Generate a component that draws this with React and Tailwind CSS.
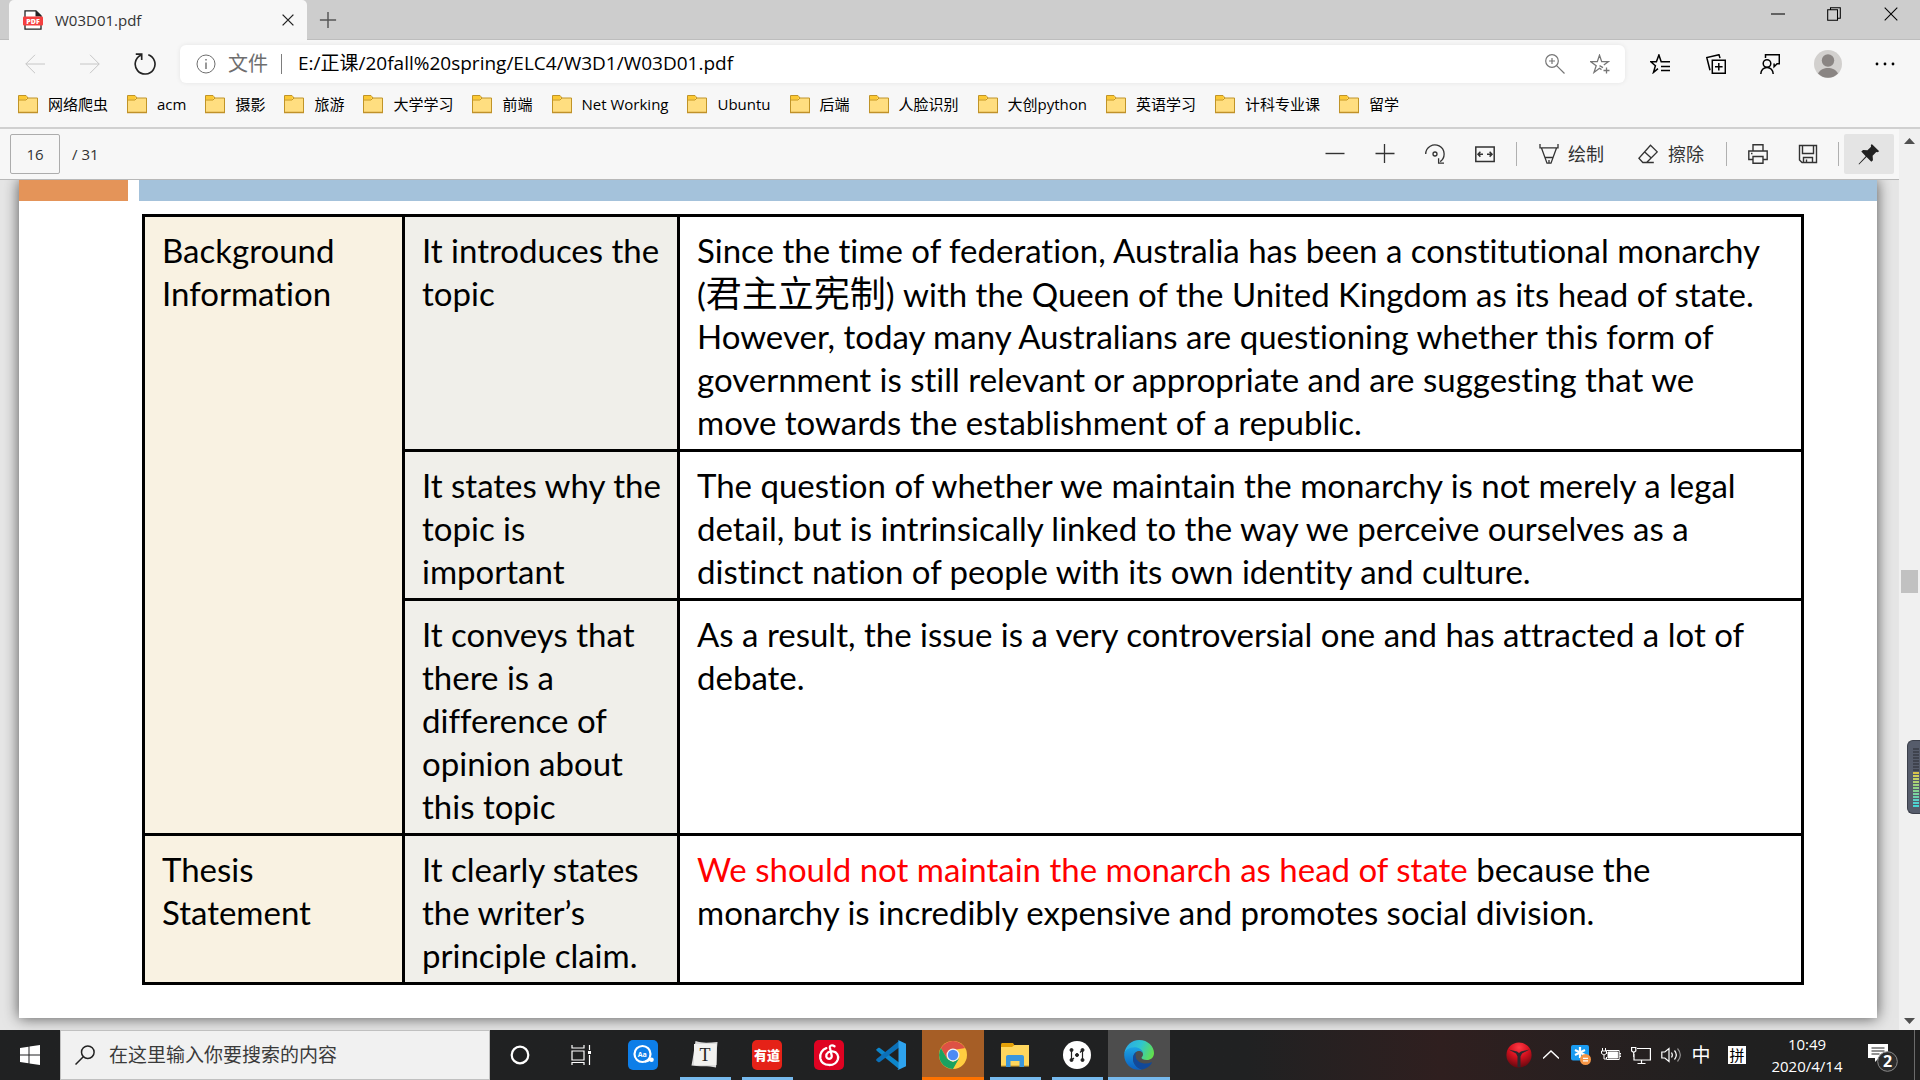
import React, { useState } from 'react';

const pastas = [
  '网络爬虫', 'acm', '摄影', '旅游', '大学学习', '前端', 'Net Working',
  'Ubuntu', '后端', '人脸识别', '大创python', '英语学习', '计科专业课', '留学',
];

const Icon = ({ size = 20, sw = 1, className = '', children }) => (
  <svg width={size} height={size} viewBox="0 0 20 20" fill="none" stroke="currentColor" strokeWidth={sw} className={`shrink-0 ${className}`} aria-hidden="true">
    {children}
  </svg>
);

const Folder = () => (
  <svg width="20" height="20" viewBox="0 0 20 20" className="shrink-0" aria-hidden="true">
    <path d="M.5 18.5v-17h7.5l2 2.5h9.5v14.5z" fill="#ffde80" stroke="#c09428" />
    <path d="M1 2h7l1 1.5-1.5 2H1z" fill="#fcc934" />
    <path d="M.5 6h7.5l2-2" fill="none" stroke="#c8961a" />
    <path d="M0 18.5h20" stroke="#c0912a" strokeWidth="1.5" />
  </svg>
);

const PdfIcon = () => (
  <svg width="20" height="20" viewBox="0 0 20 20" className="shrink-0" aria-hidden="true">
    <path d="M2 19.2V.8h11l5 5v13.4z" fill="#fff" stroke="#222" strokeWidth="1.3" />
    <path d="M12.5.5v6H18.5z" fill="#222" />
    <rect x="0" y="6.5" width="20" height="9" rx="1" fill="#f43f3f" />
    <text x="10" y="13.6" textAnchor="middle" fontSize="7" fontWeight="800" fill="#fff" fontFamily="Open Sans, sans-serif">PDF</text>
  </svg>
);

const TabStrip = () => (
  <header className="relative flex h-10 shrink-0 items-center border-b border-[#bdbdbd] bg-[#cdcdcd]">
    <div className="relative -mb-px ml-[9px] flex h-10 w-[298px] items-center rounded-t-[5px] bg-[#f7f7f7] pl-[14px] pr-[7px]">
      <PdfIcon />
      <span className="ml-3 flex-1 text-[15px] text-[#333]">W03D01.pdf</span>
      <button aria-label="关闭标签页" className="flex h-6 w-6 items-center justify-center text-[#222]">
        <Icon size={12} sw={2.2}><path d="M1 1l18 18M19 1L1 19" /></Icon>
      </button>
    </div>
    <button aria-label="新建标签页" className="flex h-8 w-[42px] items-center justify-center text-[#555]">
      <Icon size={18} sw={1.6}><path d="M10 1v18M1 10h18" /></Icon>
    </button>
    <div className="ml-auto flex h-7 self-start text-black">
      <button aria-label="最小化" className="flex w-14 items-center justify-center"><Icon size={14} sw={1.5}><path d="M0 10h20" /></Icon></button>
      <button aria-label="还原" className="flex w-14 items-center justify-center">
        <Icon size={14} sw={1.5}><path d="M1 4h14v15H1zM5 4V1h14v15h-4" /></Icon>
      </button>
      <button aria-label="关闭" className="flex w-[58px] items-center justify-center"><Icon size={14} sw={1.5}><path d="M1 1l18 18M19 1L1 19" /></Icon></button>
    </div>
  </header>
);

const AddressRow = () => {
  const [url, setUrl] = useState('E:/正课/20fall%20spring/ELC4/W3D1/W03D01.pdf');
  return (
    <div className="flex h-[47px] shrink-0 items-center pl-[7px] pr-[9px]">
      <button aria-label="后退" className="flex w-14 justify-center text-[#c6c6c6]"><Icon><path d="M20 10H.8M10 .8L.8 10l9.2 9.2" /></Icon></button>
      <button aria-label="前进" className="flex w-[54px] justify-center text-[#c6c6c6]"><Icon><path d="M0 10h19.2M10 .8l9.2 9.2-9.2 9.2" /></Icon></button>
      <button aria-label="刷新" className="flex w-14 justify-center text-[#222]">
        <Icon size={22} sw={1.5}><path d="M13 1.6A9 9 0 1 1 6.2 2M1.6 1H7v5.4" /></Icon>
      </button>
      <div className="ml-[7px] flex h-[38px] flex-1 items-center rounded-md bg-white pl-4 pr-[6px] shadow-[0_0_5px_rgba(0,0,0,0.08)]">
        <Icon className="text-[#6e6e6e]"><circle cx="10" cy="10" r="9" /><path d="M10 8.5V15M10 5v1.6" strokeWidth="1.4" /></Icon>
        <label htmlFor="url" className="ml-3 border-r border-[#7d7d7d] pr-[13px] text-[20px] leading-5 text-[#6e6e6e]">文件</label>
        <input id="url" value={url} onChange={e => setUrl(e.target.value)} className="ml-4 min-w-0 flex-1 bg-transparent text-[19px] text-black outline-none" />
        <button aria-label="缩放" className="flex w-[52px] justify-center text-[#767676]">
          <Icon sw={1.2}><circle cx="7" cy="7" r="6.3" /><path d="M11.6 11.6L19.5 19.5M7 4v6M4 7h6" /></Icon>
        </button>
        <button aria-label="添加到收藏夹" className="flex w-[38px] justify-center text-[#767676]">
          <Icon sw={1.3}><path d="M13 13.6l-3.5-2M11.5 15.6l-2-1.3L4 18.4l2.2-6.7L.8 7.7h6.5l2.2-6.5 2.2 6.500h6.500l-4.400 3.400M16.500 13.500v6M13.500 16.500h6" /></Icon>
        </button>
      </div>
      <div className="ml-[7px] flex items-center text-black">
        <button aria-label="收藏夹" className="flex w-14 justify-center">
          <Icon sw={1.5}><path d="M8 14.6L3.5 18.4l1.9-6.7L.8 7.7h5.6L8.9 1l2.3 6.7H20M11 12.5h9M11 16.5h9" /></Icon>
        </button>
        <button aria-label="集锦" className="flex w-[55px] justify-center">
          <Icon sw={1.5}><path d="M6.3 6.3h13v13h-13zM12.8 9v7.6M9 12.8h7.6M4 16.2L.8 3.6 13 .7l1 3.4" /></Icon>
        </button>
        <button aria-label="反馈" className="flex w-[54px] justify-center">
          <Icon sw={1.5}><circle cx="7" cy="9.5" r="3.8" /><path d="M.8 20c0-4 2.8-6.6 6.2-6.6s6.2 2.6 6.2 6.6M5.5 4V.8h13.8v9h-2.2l-3 3V9.5" /></Icon>
        </button>
        <button aria-label="个人资料" className="flex w-[62px] justify-center">
          <svg width="28" height="28" viewBox="0 0 28 28" aria-hidden="true">
            <circle cx="14" cy="14" r="14" fill="#d2d0ce" />
            <circle cx="14" cy="10.5" r="6.2" fill="#8a8583" />
            <path d="M4 23.6C6 19.6 10 18 14 18s8 1.6 10 5.6A14 14 0 0 1 4 23.6z" fill="#8a8583" />
          </svg>
        </button>
        <button aria-label="设置及其他" className="flex w-[52px] justify-center">
          <Icon><g fill="currentColor" stroke="none"><circle cx="2" cy="10" r="1.4" /><circle cx="10" cy="10" r="1.4" /><circle cx="18" cy="10" r="1.4" /></g></Icon>
        </button>
      </div>
    </div>
  );
};

const BookmarksBar = () => (
  <nav className="flex h-[42px] shrink-0 items-center gap-[19px] border-b-2 border-[#d0d0d0] pb-[6px] pl-[18px] text-[15px] text-black">
    {pastas.map(nome => (
      <button key={nome} className="flex items-center gap-[10px] whitespace-nowrap">
        <Folder />
        {nome}
      </button>
    ))}
  </nav>
);

const Sep = () => <span className="h-6 w-px bg-[#b0b0b0]" />;

const PdfToolbar = () => {
  const [pagina, setPagina] = useState('16');
  return (
    <div className="flex h-[51px] shrink-0 items-center border-b border-[#b8b8b8] bg-[#f7f7f7] pl-[10px] pr-[5px] text-[#333]">
      <input aria-label="页码" value={pagina} onChange={e => setPagina(e.target.value)} className="h-10 w-[50px] rounded-xs border border-[#acacac] bg-transparent text-center text-[15px]" />
      <span className="ml-3 text-[15px]">/ 31</span>
      <div className="ml-auto flex items-center">
        <button aria-label="缩小" className="flex w-[50px] justify-center"><Icon sw={1.4}><path d="M.5 9.5h19" /></Icon></button>
        <button aria-label="放大" className="flex w-[50px] justify-center"><Icon sw={1.3}><path d="M.5 9.5h19M9.5 0v19" /></Icon></button>
        <button aria-label="旋转" className="flex w-[50px] justify-center">
          <Icon sw={1.3}><path d="M.7 10a9.2 9.2 0 1 1 14.5 7.600M19 19.200h-5.400v-5" /><circle cx="10" cy="10" r="2" /></Icon>
        </button>
        <button aria-label="适合宽度" className="mr-[6px] flex w-[50px] justify-center">
          <Icon sw={1.5}><path d="M.8 3h18.4v14.5H.8zM3 10.2h5M12 10.2h5M5.4 7.8L3 10.2l2.4 2.4M14.6 7.8l2.4 2.4-2.4 2.4" /></Icon>
        </button>
        <Sep />
        <button className="ml-[22px] flex items-center gap-[9px] text-[18px]">
          <Icon sw={1.3}><path d="M1 0v3.8h18V0M2.4 3.8L8 19.2h4l5.6-15.4M6.4 13.5h7.2M10 16v3" /></Icon>
          绘制
        </button>
        <button className="mr-[22px] ml-[34px] flex items-center gap-[10px] text-[18px]">
          <Icon sw={1.3}><path d="M12.5 1.2l6.7 6.7L8.6 18.5H4.8L.9 14.2zM6.2 7.6l7 6.5M4.8 18.5h11" /></Icon>
          擦除
        </button>
        <Sep />
        <button aria-label="打印" className="flex w-[61px] justify-center">
          <Icon sw={1.4}><path d="M5 7V.8h10V7M5 15.5H.8V7h18.4v8.5H15M5 12.5h10v6.7H5zM3 9.5h1.5" /></Icon>
        </button>
        <button aria-label="保存" className="mr-[11px] flex w-[39px] justify-center">
          <Icon sw={1.4}><path d="M1.5 1.5h17v17H4l-2.5-2.5zM4.5 1.5v8h11v-8M5.5 18.5v-5h9v5M8.5 18v-2.5" /></Icon>
        </button>
        <Sep />
        <button aria-label="固定工具栏" className="ml-[5px] flex h-10 w-[50px] items-center justify-center rounded-xs bg-[#e4e4e4] text-[#222]">
          <Icon size={22}><path d="M12.5.8l6.8 6.8-1.7.8-1-.2-3.3 3.4.3 4-1.5 1.5-4.3-4.3L1 19.5.5 19l6.500-7-4-4.200 1.600-1.500 4 .4 3.300-3.400-.3-1z" fill="currentColor" stroke="none" /></Icon>
        </button>
      </div>
    </div>
  );
};

const Celula = ({ linhas }) => linhas.map((l, i) => <span key={i} className="block h-[43px] whitespace-nowrap">{l}</span>);

const linhasTabela = [
  {
    grupo: ['Background', 'Information'],
    span: 3,
    papel: ['It introduces the', 'topic'],
    texto: [
      'Since the time of federation, Australia has been a constitutional monarchy',
      <>(<span className="text-[36px]">君主立宪制</span>) with the Queen of the United Kingdom as its head of state.</>,
      'However, today many Australians are questioning whether this form of',
      'government is still relevant or appropriate and are suggesting that we',
      'move towards the establishment of a republic.',
    ],
  },
  {
    papel: ['It states why the', 'topic is', 'important'],
    texto: [
      'The question of whether we maintain the monarchy is not merely a legal',
      'detail, but is intrinsically linked to the way we perceive ourselves as a',
      'distinct nation of people with its own identity and culture.',
    ],
  },
  {
    papel: ['It conveys that', 'there is a', 'difference of', 'opinion about', 'this topic'],
    texto: ['As a result, the issue is a very controversial one and has attracted a lot of', 'debate.'],
  },
  {
    grupo: ['Thesis', 'Statement'],
    span: 1,
    papel: ['It clearly states', 'the writer’s', 'principle claim.'],
    texto: [
      <><span className="text-[#ff0000]">We should not maintain the monarch as head of state</span> because the</>,
      'monarchy is incredibly expensive and promotes social division.',
    ],
  },
];

const Slide = () => (
  <article className="ml-[19px] mr-[22px] bg-white pb-[33px] shadow-[0_0_14px_rgba(0,0,0,0.65)]">
    <div className="flex h-[21px] gap-[11px]">
      <div className="w-[109px] bg-[#e49459]" />
      <div className="flex-1 bg-[#a4c2db]" />
    </div>
    <div className="ml-[123px] mr-[73px] pt-[13px]">
      <table className="w-full table-fixed border-collapse text-left font-['Lato','Noto_Sans_CJK_SC',sans-serif] text-[33px] leading-[43px] text-black [font-variant-ligatures:none]">
        <colgroup>
          <col className="w-[260px]" />
          <col className="w-[275px]" />
          <col />
        </colgroup>
        <tbody>
          {linhasTabela.map((l, i) => (
            <tr key={i} className="align-top">
              {l.grupo && (
                <th scope="rowgroup" rowSpan={l.span} className="border-3 border-black bg-[#f9f2e2] px-[17px] pt-3 pb-[5px] font-normal">
                  <Celula linhas={l.grupo} />
                </th>
              )}
              <td className="border-3 border-black bg-[#f0efea] px-[17px] pt-3 pb-[5px]"><Celula linhas={l.papel} /></td>
              <td className="border-3 border-black px-[17px] pt-3 pb-[5px]"><Celula linhas={l.texto} /></td>
            </tr>
          ))}
        </tbody>
      </table>
    </div>
  </article>
);

const Scrollbar = () => (
  <div className="flex w-[21px] shrink-0 flex-col items-center justify-between bg-[#f0f0f0] pt-[9px] pb-[6px] text-[#505050]">
    <svg width="11" height="6" viewBox="0 0 11 6" aria-hidden="true"><path d="M0 6L5.5 0 11 6z" fill="currentColor" /></svg>
    <div className="h-[23px] w-[17px] bg-[#c1c1c1]" />
    <svg width="11" height="6" viewBox="0 0 11 6" aria-hidden="true"><path d="M0 0l5.5 6L11 0z" fill="currentColor" /></svg>
  </div>
);

const medidor = [
  '#3f434e', '#3f434e', '#3f434e', '#3f434e', '#3f434e', '#3f434e', '#3f434e', '#3f434e',
  '#d9c24a', '#d2cf58', '#c3d166', '#b0d172', '#9ed27c', '#8fd286', '#84d392', '#7bd39f',
  '#6bd0ac', '#5ccfc6', '#52d0cf', '#45d6d6',
];

const Medidor = () => (
  <div className="absolute right-0 bottom-[266px] flex h-[74px] w-[13px] flex-col items-center justify-center gap-px rounded-l-md border border-r-0 border-[#3b3f4a] bg-[#565c6b] pl-[3px]">
    {medidor.map((cor, i) => <span key={i} className="h-[2px] w-[6px]" style={{ background: cor }} />)}
  </div>
);

const AaIcon = () => (
  <svg width="30" height="30" viewBox="0 0 30 30" aria-hidden="true">
    <rect width="30" height="30" rx="5" fill="#0d7ee8" />
    <circle cx="14.5" cy="14" r="8" fill="none" stroke="#fff" strokeWidth="2.2" />
    <path d="M17 21.5c2 0 4-1 5.5-2.5" stroke="#fff" strokeWidth="2" fill="none" />
    <circle cx="23.5" cy="19.8" r="2.3" fill="#fff" />
    <text x="14.3" y="16.5" textAnchor="middle" fontSize="7" fontWeight="700" fill="#fff" fontFamily="Open Sans, sans-serif">Aa</text>
  </svg>
);

const TyporaIcon = () => (
  <svg width="30" height="30" viewBox="0 0 30 30" aria-hidden="true">
    <path d="M5.500 1c7 2.500 14 1.500 22 1-1 8-.5 16-1.500 25.500-8-2.500-16-.5-24.500-2C3 18 4 10 5.500 1z" fill="#dcdcdc" />
    <path d="M4 4h22.500v21H4z" fill="#f2f2f0" />
    <text x="15" y="21" textAnchor="middle" fontSize="18" fill="#222" fontFamily="Liberation Serif, serif">T</text>
  </svg>
);

const YoudaoIcon = () => (
  <svg width="30" height="30" viewBox="0 0 30 30" aria-hidden="true">
    <rect width="30" height="30" rx="5" fill="#e52218" />
    <text x="15" y="20" textAnchor="middle" fontSize="13" fontWeight="900" fill="#fff" fontFamily="Noto Sans CJK SC, sans-serif">有道</text>
  </svg>
);

const NeteaseIcon = () => (
  <svg width="30" height="30" viewBox="0 0 30 30" aria-hidden="true">
    <rect width="30" height="30" rx="5" fill="#df0322" />
    <path d="M20.5 6.3c-2.2-1.6-5-1-4.6 1.5l1.8 7.6c.8 4-5 4.6-5.4 1-.4-3.4 3.2-5.600 6.600-5 4.200.6 5.900 4.400 5 7.800-2.200 7.600-15.600 8-17.600-.6-1-4.800 2-9 6-10.400" fill="none" stroke="#fff" strokeWidth="2.3" strokeLinecap="round" />
  </svg>
);

const VsCodeIcon = () => (
  <svg width="30" height="30" viewBox="0 0 30 30" aria-hidden="true">
    <path d="M0 9.8l2-1.8c.6-.5 1.2-.4 1.8 0L23 22.5V29L1 11z" fill="#0d86cb" />
    <path d="M0 20.2L2 22c.6.5 1.2.4 1.8 0L23 7.5V1L.5 19z" fill="#0b70b8" />
    <path d="M22.5.2L30 3.8v22.4l-7.5 3.6c-.6.2-1 .1-1.5-.3.8.4 1.5 0 1.5-1V1.500c0-1-.7-1.400-1.500-1 .5-.4 1-.4 1.500-.3z" fill="#2ea3ee" />
  </svg>
);

const ChromeIcon = () => (
  <svg width="28" height="28" viewBox="0 0 28 28" aria-hidden="true">
    <circle cx="14" cy="14" r="14" fill="#ffcd40" />
    <path d="M1.9 7A14 14 0 0 1 26.1 7L14 7.5 8 17.5z" fill="#dd5144" />
    <path d="M26.1 7H14v2z" fill="#dd5144" />
    <path d="M1.9 7A14 14 0 0 0 14 28l6-10.5-6 3.5-6-3.5z" fill="#1aa260" />
    <circle cx="14" cy="14" r="6.5" fill="#f1f1f1" />
    <circle cx="14" cy="14" r="5.2" fill="#4c8bf5" />
  </svg>
);

const ExplorerIcon = () => (
  <svg width="28" height="24" viewBox="0 0 28 24" aria-hidden="true">
    <path d="M0 1.5C0 .6.6 0 1.5 0H12l2 3v5H0z" fill="#e3a008" />
    <path d="M0 4h11l2.5-2H28v21H0z" fill="#ffd75e" />
    <path d="M0 22h28v1.5H0z" fill="#e5b73f" />
    <path d="M5 24V14c0-1.2.8-2 2-2h14c1.2 0 2 .8 2 2v10h-4.5v-6h-9v6z" fill="#3a96dd" />
  </svg>
);

const HubIcon = () => (
  <svg width="28" height="28" viewBox="0 0 28 28" aria-hidden="true">
    <circle cx="14" cy="14" r="14" fill="#fff" />
    <g fill="#222" stroke="#222">
      <path d="M8.500 9v10l2.500-2M19.500 19V9L17 11.500" strokeWidth="1.200" fill="none" />
      <circle cx="8.5" cy="9" r="1.5" /><circle cx="8.5" cy="19" r="1.5" />
      <circle cx="19.5" cy="9" r="1.5" /><circle cx="19.5" cy="19" r="1.5" />
      <circle cx="14" cy="14" r="1.5" />
    </g>
  </svg>
);

const EdgeIcon = () => (
  <svg width="30" height="30" viewBox="0 0 30 30" aria-hidden="true">
    <defs>
      <linearGradient id="ed1" x1="0" y1="0.3" x2="1" y2="0.6"><stop offset="0" stopColor="#2aa9e8" /><stop offset=".5" stopColor="#2fc5cf" /><stop offset="1" stopColor="#63e04c" /></linearGradient>
      <linearGradient id="ed2" x1="0" y1="0" x2="0" y2="1"><stop offset="0" stopColor="#1ca3e4" /><stop offset="1" stopColor="#0b5fc0" /></linearGradient>
    </defs>
    <path d="M.3 13.5C1.5 5.5 7.5 0 15.2 0 24 0 30 6.5 30 13c0 4.5-3.3 7-7.2 7-3.4 0-5.3-1-5.3-2.2 0-.9 1.5-1.3 1.5-3.6 0-3-3-6-8-6-5.2 0-9 2.5-10.7 5.3z" fill="url(#ed1)" />
    <path d="M.2 15C.2 10 5 7.2 10.5 7.2c4.5 0 7.8 2.6 8.4 5.8-1-1.6-2.8-2.2-4.4-2-3.6.5-5.5 4-5.5 7.500 0 4.500 3 9.500 9 10.900C8.500 31.500.2 24.500.2 15z" fill="url(#ed2)" />
    <path d="M12.2 12c-2 1.4-3.2 4-3.2 6.8 0 5 4 10.2 9.5 10.6 4.2-.6 7.6-3.2 9.3-6.3.3-.6-.2-1-.8-.7-6 2.8-15.5 0-15.5-7 0-1.300.2-2.500.7-3.400z" fill="#11499a" />
  </svg>
);

const tarefas = [
  { nome: '词典', icone: <AaIcon /> },
  { nome: 'Typora', icone: <TyporaIcon />, aberto: true },
  { nome: '有道', icone: <YoudaoIcon />, aberto: true },
  { nome: '网易云音乐', icone: <NeteaseIcon /> },
  { nome: 'VS Code', icone: <VsCodeIcon /> },
  { nome: 'Chrome', icone: <ChromeIcon />, classe: 'bg-[#a65e26]', barra: 'h-[3px] w-full bg-[#ff7200]' },
  { nome: '文件资源管理器', icone: <ExplorerIcon />, aberto: true },
  { nome: 'Hub', icone: <HubIcon />, aberto: true },
  { nome: 'Edge', icone: <EdgeIcon />, classe: 'bg-[#4d4d4d]', barra: 'h-[3px] w-full bg-[#76b9ed]' },
];

const Tray = () => (
  <div className="ml-auto flex h-full items-center text-white">
    <button aria-label="安全" className="flex w-[38px] justify-center">
      <svg width="26" height="26" viewBox="0 0 26 26" aria-hidden="true">
        <defs><radialGradient id="rd" cx=".5" cy=".2" r=".8"><stop offset="0" stopColor="#ff3a45" /><stop offset=".5" stopColor="#d3101d" /><stop offset="1" stopColor="#650a10" /></radialGradient></defs>
        <circle cx="13" cy="13" r="12.6" fill="url(#rd)" />
        <path d="M2.5 7.5L11 9.5l2 1.500 2-1.500 8.500-2-7.500 4-1.500 3V25h-3V14.500l-1.500-3z" fill="#2a2a30" />
      </svg>
    </button>
    <button aria-label="显示隐藏的图标" className="flex w-[26px] justify-center"><Icon size={16} sw={1.8}><path d="M0 14.5L10 5l10 9.5" /></Icon></button>
    <button aria-label="同步" className="flex w-[34px] justify-center">
      <svg width="20" height="20" viewBox="0 0 20 20" aria-hidden="true">
        <rect width="18" height="15.5" rx="2" fill="#1a9bf0" />
        <path d="M9 2v11M4 5l10 5M14 5L4 10" stroke="#fff" strokeWidth="2.2" />
        <circle cx="14.5" cy="14.5" r="5.5" fill="#f79646" />
        <path d="M12 13.3h5M12 15.8h5" stroke="#fff" strokeWidth="1.2" />
      </svg>
    </button>
    <button aria-label="电源" className="flex w-[26px] justify-center">
      <Icon><path d="M5.5 9V5.5h12.7v9H5.5V12" /><path d="M7 7h9.700v6H7z" fill="currentColor" /><path d="M18.500 8.500h1.500v3h-1.500M1.500 3v3M4.500 3v3M.5 6h5v2.500L3 10 .5 8.500zM3 10v4h2" /></Icon>
    </button>
    <button aria-label="网络" className="flex w-[34px] justify-center">
      <Icon sw={1.2}><path d="M6 3.5h13.4V15H3V9M10.5 15v3.5M6.5 18.5h8M.6 2.5h4.2V6L2.7 7.500.6 6zM2.700 7.500V12" /></Icon>
    </button>
    <button aria-label="音量" className="flex w-[26px] justify-center">
      <Icon sw={1.2}><path d="M.8 7h3L8 3.5v13L3.8 13h-3z" /><path d="M10.5 7.500c1 1.500 1 3.500 0 5M13.500 5.500c2.200 2.700 2.200 6.300 0 9" /><path d="M16.500 3.500c3.500 4 3.500 9 0 13" opacity=".5" /></Icon>
    </button>
    <button className="w-[34px] text-center text-[19px]">中</button>
    <button className="flex w-[38px] justify-center">
      <span className="flex h-[18px] w-[18px] items-center justify-center bg-white text-[15px] leading-[18px] text-black">拼</span>
    </button>
    <button className="ml-3 w-[78px] text-center text-[15px] leading-[22px]">
      <span className="block">10:49</span>
      <span className="block">2020/4/14</span>
    </button>
    <button aria-label="通知" className="ml-5 mr-3 w-[36px]">
      <svg width="32" height="34" viewBox="0 0 32 34" aria-hidden="true">
        <path d="M2 6h20v14h-9l-4 4v-4H2z" fill="#fff" />
        <path d="M5.500 10h13M5.500 13h13M5.500 16h8" stroke="#222" strokeWidth="1.200" />
        <circle cx="21.5" cy="23.5" r="9.8" fill="#2c2c2c" stroke="#8a8a8a" />
        <text x="21.5" y="29" textAnchor="middle" fontSize="16" fontWeight="700" fill="#fff" fontFamily="Open Sans, sans-serif">2</text>
      </svg>
    </button>
    <span className="mr-[5px] h-full w-px bg-[#6b6b6b]" />
  </div>
);

const Taskbar = () => (
  <footer className="flex h-[50px] shrink-0 items-center bg-linear-to-r from-[#202122] from-65% via-[#2f1f1f] via-75% to-[#202020] to-90%">
    <button aria-label="开始" className="flex h-full w-[60px] items-center justify-center text-white">
      <Icon><path d="M0 3l8.5-1.2v7.7H0zM9.5 1.6L20 0v9.5H9.5zM0 10.5h8.5v7.7L0 17zM9.5 10.5H20V20L9.5 18.4z" fill="currentColor" stroke="none" /></Icon>
    </button>
    <div className="flex h-full w-[430px] items-center border border-[#c0c0c0] bg-[#f1f1f1] pl-[14px] text-[#222]">
      <Icon sw={1.5}><circle cx="12.8" cy="7.2" r="6.3" /><path d="M8.3 11.7L.5 19.5" /></Icon>
      <input aria-label="搜索" placeholder="在这里输入你要搜索的内容" className="ml-[14px] min-w-0 flex-1 bg-transparent text-[19px] outline-none placeholder:text-[#3a3a3a]" />
    </div>
    <button aria-label="Cortana" className="flex w-[60px] justify-center text-white"><Icon sw={2.2}><circle cx="10" cy="10" r="8.3" /></Icon></button>
    <button aria-label="任务视图" className="flex w-[62px] justify-center text-white">
      <Icon sw={1.2}><path d="M1 6h12v9H1zM1 0v3h12V0M1 20v-2.5h12V20M18.5 0v5M18.5 10v10" /><path d="M17 6h3v3h-3z" fill="currentColor" stroke="none" /></Icon>
    </button>
    {tarefas.map(t => (
      <button key={t.nome} aria-label={t.nome} className={`relative flex h-full w-[62px] items-center justify-center ${t.classe || ''}`}>
        {t.icone}
        {(t.aberto || t.barra) && <span className={`absolute bottom-0 ${t.barra || 'h-[3px] w-[51px] bg-[#76b9ed]'}`} />}
      </button>
    ))}
    <Tray />
  </footer>
);

const App = () => (
  <div className="relative flex h-screen flex-col overflow-hidden bg-[#f7f7f7] font-['Open_Sans','Noto_Sans_CJK_SC',sans-serif]">
    <TabStrip />
    <AddressRow />
    <BookmarksBar />
    <main className="flex min-h-0 flex-1">
      <div className="flex min-w-0 flex-1 flex-col">
        <PdfToolbar />
        <div className="flex-1 overflow-hidden bg-[#e6e6e6]">
          <Slide />
        </div>
      </div>
      <Scrollbar />
    </main>
    <Taskbar />
    <Medidor />
  </div>
);

export default App;
